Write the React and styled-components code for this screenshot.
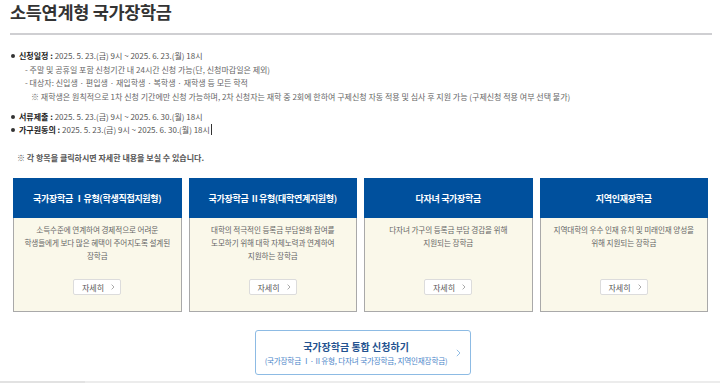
import React from "react";
import styled, { createGlobalStyle } from "styled-components";

const GlobalStyle = createGlobalStyle`
  html, body {
    margin: 0;
    padding: 0;
    background: #fff;
  }
  body {
    font-family: "Noto Sans CJK KR", "Noto Sans", sans-serif;
    color: #555;
  }
`;

const Page = styled.div`
  width: 720px;
  height: 383px;
  overflow: hidden;
  padding: 0 8px 0 10px;
  box-sizing: border-box;
  display: flex;
  flex-direction: column;
`;

const Title = styled.h2`
  margin: 0;
  font-size: 17.5px;
  line-height: 24px;
  font-weight: 700;
  color: #333;
  letter-spacing: -0.3px;
`;

const Divider = styled.div`
  height: 2px;
  background: #cfcfd2;
  margin-top: 9px;
`;

const InfoList = styled.ul`
  list-style: none;
  margin: 14px 0 0;
  padding: 0;
  font-size: 8px;
  line-height: 13.5px;
  white-space: nowrap;
`;

const Item = styled.li`
  position: relative;
  padding-left: 9px;
  margin-bottom: ${p => (p.$gap ? "6.5px" : "0")};

  &::before {
    content: "";
    position: absolute;
    left: 1px;
    top: 5px;
    width: 4px;
    height: 4px;
    border-radius: 50%;
    background: #333;
  }
`;

const Label = styled.strong`
  font-weight: 700;
  color: #222;
`;

const Value = styled.span`
  color: #555;
`;

const SubLine = styled.div`
  padding-left: ${p => (p.$note ? "12px" : "6px")};
  color: #666;
`;

const Caret = styled.span`
  display: inline-block;
  width: 1px;
  height: 11px;
  background: #333;
  vertical-align: -2px;
  margin-left: 1px;
`;

const Notice = styled.p`
  margin: 14px 0 0 7px;
  font-size: 8px;
  line-height: 13.5px;
  font-weight: 700;
  color: #555;
`;

const CardGrid = styled.div`
  display: grid;
  grid-template-columns: repeat(4, 1fr);
  gap: 7px;
  margin: 14px 4px 0 3px;
`;

const Card = styled.div`
  border: 1px solid #a9a9a9;
  display: flex;
  flex-direction: column;
  background: #faf8ea;
  min-width: 0;
`;

const CardHeader = styled.div`
  height: 40px;
  margin: -1px -1px 0;
  background: #00509d;
  color: #fff;
  font-size: 9px;
  font-weight: 700;
  display: flex;
  align-items: center;
  justify-content: center;
  letter-spacing: -0.3px;
  white-space: nowrap;
`;

const CardBody = styled.div`
  height: 93px;
  box-sizing: border-box;
  padding: 6px 4px 16px;
  display: flex;
  flex-direction: column;
  align-items: center;
  justify-content: space-between;
`;

const CardText = styled.p`
  margin: 0;
  font-size: 7.6px;
  line-height: 12.8px;
  color: #666;
  text-align: center;
  white-space: nowrap;
  letter-spacing: -0.1px;
`;

const DetailButton = styled.button`
  width: 48px;
  height: 16px;
  padding: 0 0 0 2px;
  border: 1px solid #dcdcdc;
  border-radius: 2px;
  background: #fff;
  font-family: inherit;
  font-size: 8px;
  color: #555;
  display: flex;
  align-items: center;
  justify-content: center;
  gap: 7px;
`;

const ApplyButton = styled.button`
  align-self: center;
  margin: 18px 0 0 4px;
  width: 216px;
  height: 45px;
  border: 1px solid #8dbbe4;
  border-radius: 3px;
  background: #fff;
  font-family: inherit;
  display: flex;
  align-items: center;
  padding: 0 0 0 6px;
  box-sizing: border-box;
`;

const ApplyText = styled.div`
  flex: 1;
  display: flex;
  flex-direction: column;
  align-items: center;
  white-space: nowrap;
`;

const ApplyTitle = styled.span`
  font-size: 10px;
  line-height: 15px;
  font-weight: 700;
  color: #24528f;
`;

const ApplySub = styled.span`
  font-size: 7.6px;
  line-height: 13px;
  color: #4a85c9;
  letter-spacing: -0.2px;
`;

const ApplyArrow = styled.span`
  width: 16px;
  display: flex;
  justify-content: center;
  margin-right: 4px;
`;

const Footer = styled.div`
  margin: auto -8px 0 -10px;
  height: 2px;
  display: grid;
  grid-template-columns: 85px 1fr;
  background: #ececec;

  &::before {
    content: "";
    background: #e2e2e2;
  }
`;

const Chevron = ({ color = "#777", size = 6 }) => (
  <svg width={size * 0.6} height={size} viewBox="0 0 6 10" fill="none">
    <polyline points="1,1 5,5 1,9" stroke={color} strokeWidth="1.2" />
  </svg>
);

const cards = [
  {
    title: "국가장학금 Ⅰ유형(학생직접지원형)",
    lines: ["소득수준에 연계하여 경제적으로 어려운", "학생들에게 보다 많은 혜택이 주어지도록 설계된", "장학금"],
  },
  {
    title: "국가장학금 Ⅱ유형(대학연계지원형)",
    lines: ["대학의 적극적인 등록금 부담완화 참여를", "도모하기 위해 대학 자체노력과 연계하여", "지원하는 장학금"],
  },
  {
    title: "다자녀 국가장학금",
    lines: ["다자녀 가구의 등록금 부담 경감을 위해", "지원되는 장학금"],
  },
  {
    title: "지역인재장학금",
    lines: ["지역대학의 우수 인재 유치 및 미래인재 양성을", "위해 지원되는 장학금"],
  },
];

export default function App() {
  return (
    <>
      <GlobalStyle />
      <Page>
        <Title>소득연계형 국가장학금</Title>
        <Divider />
        <InfoList>
          <Item $gap>
            <Label>신청일정 : </Label>
            <Value>2025. 5. 23.(금) 9시 ~ 2025. 6. 23.(월) 18시</Value>
            <SubLine>- 주말 및 공휴일 포함 신청기간 내 24시간 신청 가능(단, 신청마감일은 제외)</SubLine>
            <SubLine>- 대상자: 신입생 · 편입생 · 재입학생 · 복학생 · 재학생 등 모든 학적</SubLine>
            <SubLine $note>
              ※ 재학생은 원칙적으로 1차 신청 기간에만 신청 가능하며, 2차 신청자는 재학 중 2회에 한하여 구제신청 자동 적용 및 심사 후 지원 가능 (구제신청 적용 여부 선택 불가)
            </SubLine>
          </Item>
          <Item>
            <Label>서류제출 : </Label>
            <Value>2025. 5. 23.(금) 9시 ~ 2025. 6. 30.(월) 18시</Value>
          </Item>
          <Item>
            <Label>가구원동의 : </Label>
            <Value>2025. 5. 23.(금) 9시 ~ 2025. 6. 30.(월) 18시</Value>
            <Caret />
          </Item>
        </InfoList>
        <Notice>※ 각 항목을 클릭하시면 자세한 내용을 보실 수 있습니다.</Notice>
        <CardGrid>
          {cards.map(card => (
            <Card key={card.title}>
              <CardHeader>{card.title}</CardHeader>
              <CardBody>
                <CardText>
                  {card.lines.map((line, i) => (
                    <React.Fragment key={i}>
                      {line}
                      {i < card.lines.length - 1 && <br />}
                    </React.Fragment>
                  ))}
                </CardText>
                <DetailButton>
                  자세히 <Chevron color="#888" size={6} />
                </DetailButton>
              </CardBody>
            </Card>
          ))}
        </CardGrid>
        <ApplyButton>
          <ApplyText>
            <ApplyTitle>국가장학금 통합 신청하기</ApplyTitle>
            <ApplySub>(국가장학금 Ⅰ·Ⅱ유형, 다자녀 국가장학금, 지역인재장학금)</ApplySub>
          </ApplyText>
          <ApplyArrow>
            <Chevron color="#8dbbe4" size={8} />
          </ApplyArrow>
        </ApplyButton>
        <Footer />
      </Page>
    </>
  );
}
